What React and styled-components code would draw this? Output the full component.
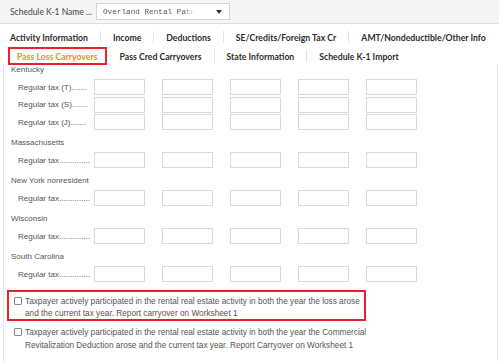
import React from 'react';
import styled, {createGlobalStyle} from 'styled-components';

const GlobalStyle = createGlobalStyle`
    body {
        margin: 0;
        background: #ffffff;
        font-family: "Liberation Sans", Arial, sans-serif;
    }
`;

const Page = styled.div`
    width: 499px;
    height: 361px;
    overflow: hidden;
    display: flex;
    flex-direction: column;
`;

const Header = styled.div`
    height: 23px;
    background: #f5f5f5;
    border-bottom: 1px solid #dedede;
    display: flex;
    align-items: center;
    padding-left: 10px;
    gap: 4px;
`;

const HeaderLabel = styled.span`
    font-family: Lato, sans-serif;
    font-size: 8.5px;
    color: #444;
`;

const Select = styled.div`
    width: 134px;
    height: 17px;
    background: #fff;
    border: 1px solid #d4d4d4;
    display: flex;
    align-items: center;
    padding: 0 6px;
    box-sizing: border-box;
    justify-content: space-between;
`;

const SelectText = styled.span`
    white-space: nowrap;
    font-family: "Liberation Mono", monospace;
    font-size: 7.7px;
    color: #555;
    mask-image: linear-gradient(to right, #000 88%, transparent);
`;

const Caret = styled.span`
    width: 0;
    height: 0;
    border-left: 3px solid transparent;
    border-right: 3px solid transparent;
    border-top: 4px solid #333;
    margin-right: 1px;
`;

const TabRow = styled.div`
    display: flex;
    align-items: center;
    padding-left: 8px;
    margin-top: ${(p) => p.$top}px;
`;

const Tab = styled.div`
    height: 14px;
    display: flex;
    align-items: center;
    padding: 0 ${(p) => (p.$active ? 7 : 10)}px 0 ${(p) => (p.$active ? 7 : p.$first ? 0 : 10)}px;
    border: 2px solid ${(p) => (p.$active ? '#e8212b' : 'transparent')};
    font-family: Lato, sans-serif;
    font-weight: 700;
    font-size: 8.7px;
    white-space: nowrap;
    color: ${(p) => (p.$active ? '#f58a1f' : '#2d2d2d')};
`;

const Sep = styled.span`
    width: 1px;
    height: 12px;
    background: ${(p) => (p.$hidden ? 'transparent' : '#e2e2e2')};
`;

const Panel = styled.div`
    flex: 1;
    margin: 0 1px 0 3px;
    border-left: 1px solid #e3e3e3;
    border-right: 1px solid #e3e3e3;
    padding-left: 3px;
`;

const Section = styled.div`
    margin-bottom: 8px;
`;

const StateLabel = styled.div`
    height: 10px;
    line-height: 10px;
    padding-left: 4px;
    margin-bottom: 4px;
    font-size: 8px;
    color: #555;
`;

const Row = styled.div`
    display: flex;
    align-items: center;
    padding-left: 11px;
    & + & {
        margin-top: 1.5px;
    }
`;

const RowLabel = styled.span`
    width: 76px;
    font-size: 8px;
    color: #555;
    white-space: nowrap;
`;

const Fields = styled.div`
    display: flex;
    gap: 17px;
`;

const Field = styled.div`
    width: 51px;
    height: 16px;
    box-sizing: border-box;
    border: 1px solid #d9d9d9;
    background: #fff;
`;

const CheckLine = styled.div`
    width: 359px;
    box-sizing: border-box;
    border: 2px solid ${(p) => (p.$flagged ? '#e8212b' : 'transparent')};
    padding: 4px 0 0 5px;
    display: flex;
    align-items: flex-start;
    gap: 3px;
`;

const Box = styled.span`
    flex: none;
    width: 8px;
    height: 8px;
    box-sizing: border-box;
    border: 1px solid #8a8a8a;
    border-radius: 1px;
    background: #fff;
    margin-top: 1px;
`;

const CheckText = styled.span`
    font-size: 8.25px;
    line-height: ${(p) => (p.$flagged ? 11.5 : 12.5)}px;
    color: #555;
    white-space: nowrap;
`;

const rowTabs = [
    ['Activity Information', 'Income', 'Deductions', 'SE/Credits/Foreign Tax Cr', 'AMT/Nondeductible/Other Info'],
    ['Pass Loss Carryovers', 'Pass Cred Carryovers', 'State Information', 'Schedule K-1 Import'],
];

const states = [
    {name: 'Kentucky', rows: ['Regular tax (T).......', 'Regular tax (S).......', 'Regular tax (J).......']},
    {name: 'Massachusetts', rows: ['Regular tax..............']},
    {name: 'New York nonresident', rows: ['Regular tax..............']},
    {name: 'Wisconsin', rows: ['Regular tax..............']},
    {name: 'South Carolina', rows: ['Regular tax..............']},
];

const App = () => {
    return (
        <Page>
            <GlobalStyle/>
            <Header>
                <HeaderLabel>Schedule K-1 Name ...</HeaderLabel>
                <Select>
                    <SelectText>Overland Rental Patn</SelectText>
                    <Caret/>
                </Select>
            </Header>
            {rowTabs.map((tabs, r) => (
                <TabRow key={r} $top={r === 0 ? 4 : 1}>
                    {tabs.map((t, i) => (
                        <React.Fragment key={t}>
                            {i > 0 && <Sep $hidden={r === 1 && i === 1}/>}
                            <Tab $first={i === 0} $active={r === 1 && i === 0}>{t}</Tab>
                        </React.Fragment>
                    ))}
                </TabRow>
            ))}
            <Panel>
                {states.map((s) => (
                    <Section key={s.name}>
                        <StateLabel>{s.name}</StateLabel>
                        {s.rows.map((label) => (
                            <Row key={label}>
                                <RowLabel>{label}</RowLabel>
                                <Fields>
                                    {[0, 1, 2, 3, 4].map((c) => <Field key={c}/>)}
                                </Fields>
                            </Row>
                        ))}
                    </Section>
                ))}
                <CheckLine $flagged>
                    <Box/>
                    <CheckText $flagged>
                        Taxpayer actively participated in the rental real estate activity in both the year the loss arose<br/>
                        and the current tax year. Report carryover on Worksheet 1
                    </CheckText>
                </CheckLine>
                <CheckLine>
                    <Box/>
                    <CheckText>
                        Taxpayer actively participated in the rental real estate activity in both the year the Commercial<br/>
                        Revitalization Deduction arose and the current tax year. Report Carryover on Worksheet 1
                    </CheckText>
                </CheckLine>
            </Panel>
        </Page>
    );
};

export default App;
